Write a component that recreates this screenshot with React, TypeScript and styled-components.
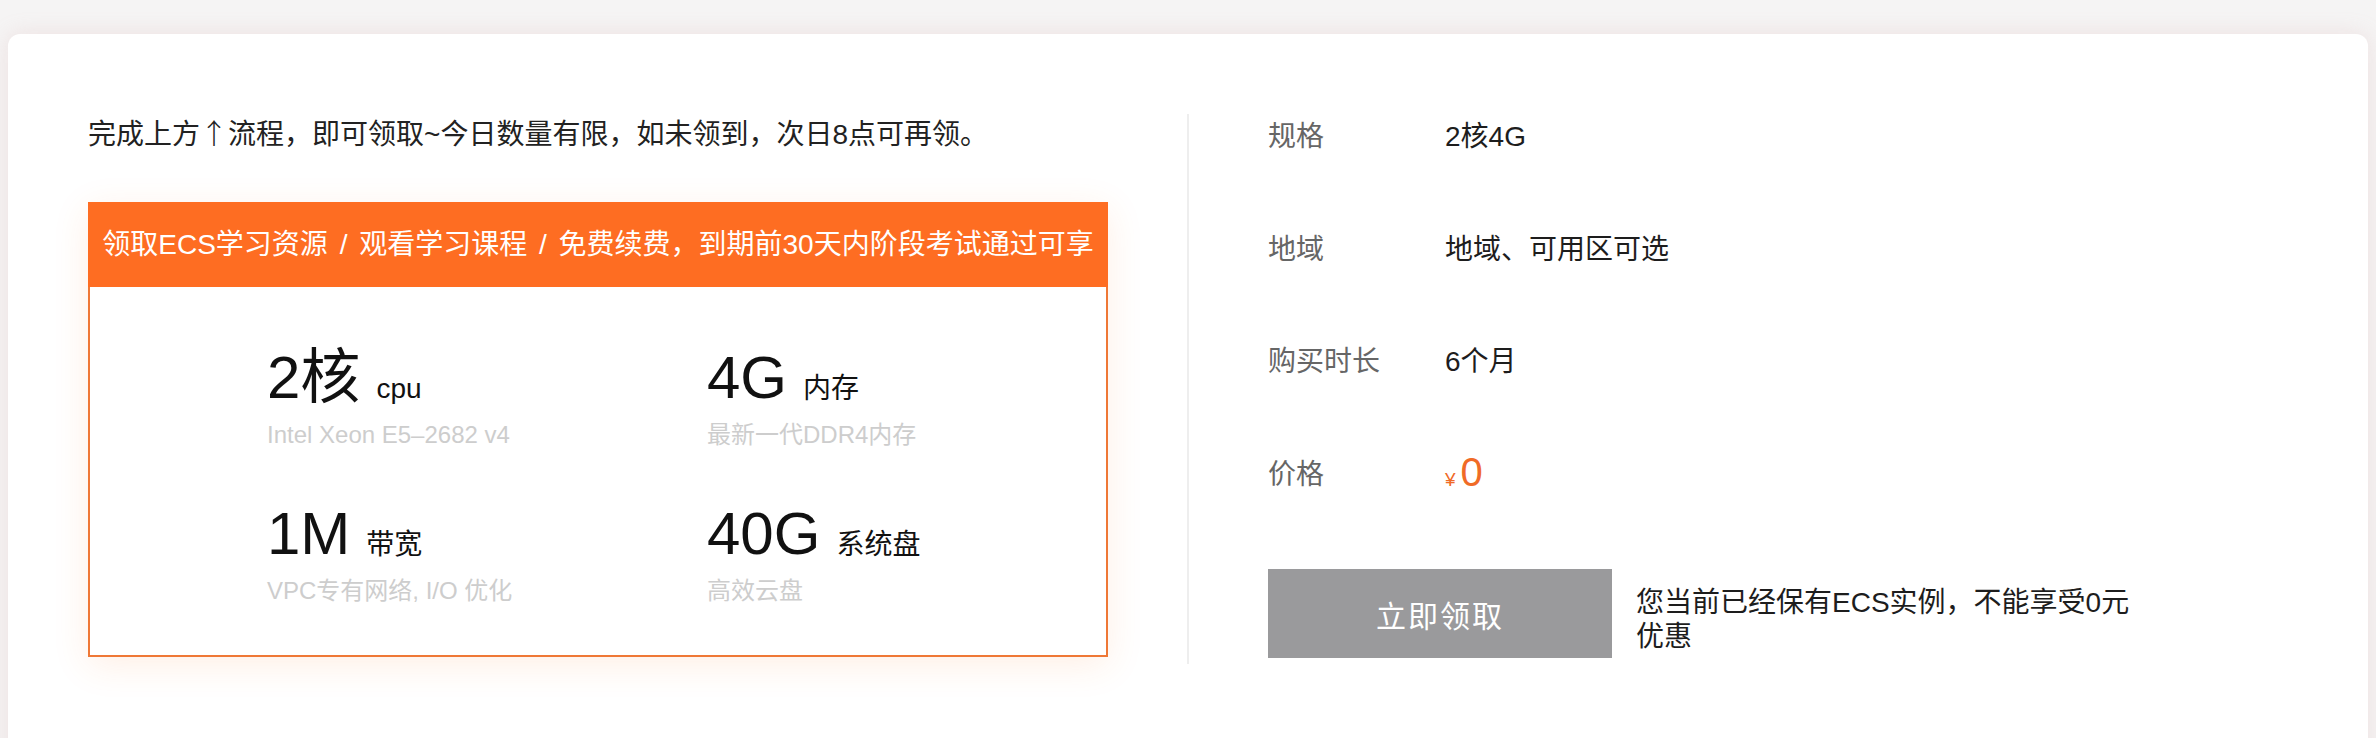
import React from "react";
import styled, { createGlobalStyle } from "styled-components";

const GlobalStyle = createGlobalStyle`
  html, body {
    margin: 0;
    padding: 0;
    background: #f5f4f4;
    overflow: hidden;
  }
  body {
    font-family: "Liberation Sans", "Noto Sans CJK SC", sans-serif;
    color: #222;
  }
  * { box-sizing: border-box; }
`;

const Page = styled.div`
  padding: 34px 8px 0;
`;

const Card = styled.div`
  display: flex;
  align-items: stretch;
  min-height: 760px;
  padding: 80px 0 0 80px;
  background: #fff;
  border-radius: 12px;
  box-shadow: 0 0 22px rgba(214, 160, 160, 0.22);
`;

const LeftCol = styled.div`
  width: 1099px;
  padding: 0 79px 6px 0;
  align-self: flex-start;
`;

const Intro = styled.p`
  margin: 0;
  height: 42px;
  font-size: 28px;
  line-height: 42px;
  color: #222;
  white-space: nowrap;
`;

const Arrow = styled.span`
  font-family: "Noto Sans CJK SC", sans-serif;
  font-weight: 300;
  line-height: 1;
`;

const OfferBox = styled.div`
  margin-top: 46px;
  width: 1020px;
  border: 2px solid #ef7836;
  background: #fff;
  box-shadow: 0 8px 34px rgba(255, 120, 40, 0.12);
`;

const OfferHeader = styled.div`
  margin: -2px -2px 0;
  height: 85px;
  line-height: 85px;
  background: #fe6d22;
  color: #fff;
  font-size: 28px;
  word-spacing: 4px;
  text-align: center;
  white-space: nowrap;
`;

const SpecGrid = styled.div`
  display: grid;
  grid-template-columns: 440px 440px;
  row-gap: 55px;
  padding: 61px 0 50px 177px;
`;

const SpecItem = styled.div`
  display: flex;
  flex-direction: column;
`;

const SpecMain = styled.div`
  display: flex;
  align-items: baseline;
  height: 60px;
`;

const BigValue = styled.span`
  font-size: 60px;
  line-height: 60px;
  color: #111;
`;

const Unit = styled.span`
  margin-left: 16px;
  font-size: 28px;
  line-height: 32px;
  color: #111;
`;

const SpecNote = styled.span`
  margin-top: 12px;
  font-size: 24px;
  line-height: 29px;
  color: #cdcdcd;
  white-space: nowrap;
`;

const RightCol = styled.div`
  flex: 1;
  display: flex;
  flex-direction: column;
  align-self: stretch;
  max-height: 550px;
  padding-left: 79px;
  border-left: 2px solid #eeeeee;
`;

const InfoRow = styled.div`
  display: flex;
  align-items: center;
  height: 40px;
  margin-bottom: 72.5px;
`;

const InfoLabel = styled.span`
  width: 177px;
  font-size: 28px;
  color: #666;
`;

const InfoValue = styled.span`
  font-size: 28px;
  color: #1d1d1d;
`;

const Price = styled.span`
  display: flex;
  align-items: baseline;
  color: #f06b27;
`;

const Yen = styled.span`
  font-size: 19px;
  margin-right: 5px;
`;

const Amount = styled.span`
  font-size: 40px;
  line-height: 40px;
`;

const ActionRow = styled.div`
  display: flex;
  align-items: center;
  margin-top: 5px;
`;

const ClaimButton = styled.button`
  flex: none;
  width: 344px;
  height: 89px;
  border: none;
  border-radius: 0;
  background: #9a9a9c;
  color: #fff;
  font-family: inherit;
  font-size: 30px;
  letter-spacing: 2px;
  cursor: not-allowed;
`;

const Notice = styled.p`
  margin: 0 0 0 24px;
  padding-top: 12px;
  max-width: 520px;
  font-size: 28px;
  line-height: 34px;
  color: #1d1d1d;
`;

const specs = [
  { value: "2核", unit: "cpu", note: "Intel Xeon E5–2682 v4" },
  { value: "4G", unit: "内存", note: "最新一代DDR4内存" },
  { value: "1M", unit: "带宽", note: "VPC专有网络, I/O 优化" },
  { value: "40G", unit: "系统盘", note: "高效云盘" },
];

const info = [
  { label: "规格", value: "2核4G" },
  { label: "地域", value: "地域、可用区可选" },
  { label: "购买时长", value: "6个月" },
];

export default function App() {
  return (
    <>
      <GlobalStyle />
      <Page>
        <Card>
          <LeftCol>
            <Intro>
              完成上方<Arrow>↑</Arrow>流程，即可领取~今日数量有限，如未领到，次日8点可再领。
            </Intro>
            <OfferBox>
              <OfferHeader>
                领取ECS学习资源 / 观看学习课程 / 免费续费，到期前30天内阶段考试通过可享
              </OfferHeader>
              <SpecGrid>
                {specs.map((s) => (
                  <SpecItem key={s.value}>
                    <SpecMain>
                      <BigValue>{s.value}</BigValue>
                      <Unit>{s.unit}</Unit>
                    </SpecMain>
                    <SpecNote>{s.note}</SpecNote>
                  </SpecItem>
                ))}
              </SpecGrid>
            </OfferBox>
          </LeftCol>
          <RightCol>
            {info.map((row) => (
              <InfoRow key={row.label}>
                <InfoLabel>{row.label}</InfoLabel>
                <InfoValue>{row.value}</InfoValue>
              </InfoRow>
            ))}
            <InfoRow>
              <InfoLabel>价格</InfoLabel>
              <Price>
                <Yen>¥</Yen>
                <Amount>0</Amount>
              </Price>
            </InfoRow>
            <ActionRow>
              <ClaimButton disabled>立即领取</ClaimButton>
              <Notice>您当前已经保有ECS实例，不能享受0元优惠</Notice>
            </ActionRow>
          </RightCol>
        </Card>
      </Page>
    </>
  );
}
